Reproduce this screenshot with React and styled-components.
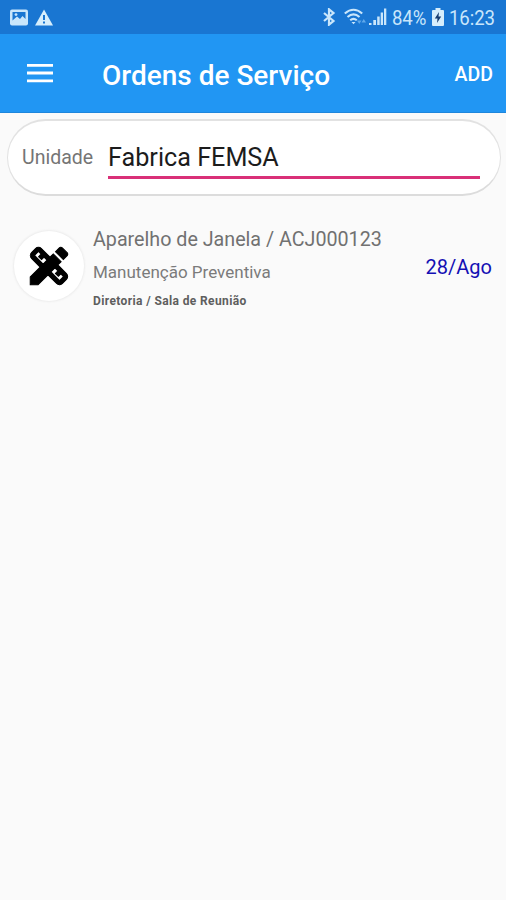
import React from "react";
import styled, { createGlobalStyle } from "styled-components";
import { MdDesignServices } from "react-icons/md";

const GlobalStyle = createGlobalStyle`
  * {
    box-sizing: border-box;
  }
  body {
    margin: 0;
    background: #fafafa;
    font-family: Roboto, "Liberation Sans", sans-serif;
  }
`;

const Screen = styled.div`
  display: flex;
  flex-direction: column;
  height: 900px;
  background: #fafafa;
`;

const StatusBar = styled.div`
  display: flex;
  justify-content: space-between;
  height: 34px;
  padding: 0 9px 0 10px;
  background: #1976d2;
  color: #c9e6fb;
`;

const StatusGroup = styled.div`
  display: flex;
  align-items: center;
  svg {
    display: block;
    flex: none;
  }
`;

const StatusText = styled.span`
  width: ${props => props.$width};
  margin-left: ${props => props.$gap};
  font-size: 20px;
  line-height: 34px;
  white-space: nowrap;
  letter-spacing: -0.1px;
  transform: translateY(1px) scaleX(0.93);
  transform-origin: left center;
`;

const AppBar = styled.header`
  display: flex;
  align-items: center;
  height: 79px;
  padding: 0 13px 0 27px;
  background: #2196f3;
  border-bottom: 1px solid #1e86dc;
  color: #fff;
`;

const MenuButton = styled.button`
  width: 26px;
  padding: 0;
  border: 0;
  background: none;
  svg {
    display: block;
  }
`;

const Title = styled.h1`
  flex: 1;
  margin: 5px 0 0 49px;
  font-size: 28px;
  font-weight: 500;
  line-height: 34px;
`;

const AddButton = styled.button`
  margin-top: 4px;
  padding: 0;
  border: 0;
  background: none;
  color: #fff;
  font: 500 19.5px/24px Roboto, sans-serif;
`;

const UnitCard = styled.section`
  display: flex;
  height: 77px;
  margin: 6px 5px 0 7px;
  padding: 0 20px 0 14px;
  border: 1px solid #e2e2e2;
  border-top-width: 2px;
  border-bottom: 2px solid #dcdcdc;
  border-radius: 39px;
  background: #fff;
`;

const UnitLabel = styled.label`
  width: 86px;
  padding-top: 25px;
  color: #757575;
  font-size: 19.5px;
  line-height: 24px;
`;

const UnitValue = styled.div`
  flex: 1;
  height: 58px;
  padding-top: 21px;
  border-bottom: 3px solid #d93078;
  color: #1c1c1c;
  font-size: 25.2px;
  line-height: 32px;
`;

const OrderRow = styled.article`
  display: flex;
  margin-top: 29px;
  padding: 0 14px;
`;

const Avatar = styled.div`
  display: flex;
  align-items: center;
  justify-content: center;
  width: 70px;
  height: 70px;
  margin-top: 6px;
  border-radius: 50%;
  background: #fff;
  box-shadow: 0 0 2px 1px #ececec;
`;

const ToolsIcon = styled(MdDesignServices)`
  width: 50px;
  height: 50px;
  color: #000;
  path:not([fill="none"]) {
    stroke: #000;
    stroke-width: 0.5px;
  }
  [fill="none"] {
    stroke: none;
  }
`;

const OrderInfo = styled.div`
  flex: 1;
  padding-left: 9px;
`;

const Equipment = styled.div`
  padding-top: 1px;
  color: #717171;
  font-size: 19.7px;
  line-height: 28px;
`;

const Service = styled.div`
  margin-top: 6px;
  color: #7b7b7b;
  font-size: 17px;
  line-height: 24px;
`;

const Place = styled.div`
  margin-top: 8px;
  color: #5e5e5e;
  font-size: 12px;
  font-weight: 700;
  line-height: 18px;
  letter-spacing: 0.38px;
`;

const DueDate = styled.time`
  margin-top: 29px;
  color: #1410b4;
  font-size: 20px;
  line-height: 26px;
`;

const PictureIcon = () => (
  <svg width="18" height="17" viewBox="0 0 18 17">
    <rect x="0" y="0.5" width="18" height="16" rx="2" fill="#c9e6fb" />
    <path d="M2.500 3h13v7l-3-3-2.500 3L7 7.500l-4.500 4z" fill="#1976d2" />
    <circle cx="6" cy="5.600" r="1.400" fill="#c9e6fb" />
  </svg>
);

const WarningMark = styled.svg`
  margin-left: 7px;
`;

const WarningIcon = () => (
  <WarningMark width="18" height="17" viewBox="0 0 18 17">
    <path d="M9 0.500L18 16.500H0z" fill="#d6eefc" />
    <path d="M8 6h2v5H8zM8 12.500h2v2H8z" fill="#1976d2" />
  </WarningMark>
);

const BluetoothIcon = () => (
  <svg width="13" height="18" viewBox="0 0 13 18" fill="none" stroke="#c9e6fb">
    <path d="M1 5l9.500 8-4.500 3.700V1.300L10.500 5 1 13" strokeWidth="2.200" />
  </svg>
);

const WifiIcon = () => (
  <svg width="24" height="18" viewBox="0 0 24 18" fill="none" stroke="#c9e6fb">
    <path
      d="M0.800 5.500Q9.500-2 18.200 5.500M3.500 9Q9.500 3.800 15.500 9M6.200 12.300Q9.500 9.500 12.800 12.300"
      strokeWidth="2.100"
    />
    <path d="M7.500 14h4l-2 2.300z" fill="#c9e6fb" stroke="none" />
    <path d="M13 12.500h4.500L15.250 16zM17.500 14.500l2.250-3.500L22 14.500z" fill="#5fa8ea" stroke="none" />
  </svg>
);

const SignalIcon = () => (
  <svg width="18" height="18" viewBox="0 0 18 18" fill="#c9e6fb">
    <path d="M0 15h2.500v2H0zM4.300 12H7v5H4.300zM8.200 8.500h2.500V17H8.200zM11.700 4.500H14V17h-2.300zM15 0.500h2.300V17H15z" />
  </svg>
);

const BatteryIcon = () => (
  <svg width="12" height="18" viewBox="0 0 12 18">
    <path
      d="M3.500 0h5v2H11a1 1 0 0 1 1 1v14a1 1 0 0 1-1 1H1a1 1 0 0 1-1-1V3a1 1 0 0 1 1-1h2.500z"
      fill="#d6eefc"
    />
    <path d="M7 4L2.800 10.500h2.700L5 15l4.200-6.500H6.500z" fill="#173d70" />
  </svg>
);

const MenuIcon = () => (
  <svg width="26" height="20" viewBox="0 0 26 20" fill="#fff">
    <path d="M0 1h26v2.700H0zM0 8.600h26v2.800H0zM0 16.500h26v2.700H0z" />
  </svg>
);

const Spacer = styled.span`
  width: ${props => props.$width};
`;

const App = () => (
  <>
    <GlobalStyle />
    <Screen>
      <StatusBar>
        <StatusGroup>
          <PictureIcon />
          <WarningIcon />
        </StatusGroup>
        <StatusGroup>
          <BluetoothIcon />
          <Spacer $width="8px" />
          <WifiIcon />
          <Spacer $width="1px" />
          <SignalIcon />
          <StatusText $width="35px" $gap="5px">
            84%
          </StatusText>
          <Spacer $width="5px" />
          <BatteryIcon />
          <StatusText $width="48px" $gap="5px">
            16:23
          </StatusText>
        </StatusGroup>
      </StatusBar>
      <AppBar>
        <MenuButton aria-label="Menu">
          <MenuIcon />
        </MenuButton>
        <Title>Ordens de Serviço</Title>
        <AddButton>ADD</AddButton>
      </AppBar>
      <UnitCard>
        <UnitLabel>Unidade</UnitLabel>
        <UnitValue>Fabrica FEMSA</UnitValue>
      </UnitCard>
      <OrderRow>
        <Avatar>
          <ToolsIcon />
        </Avatar>
        <OrderInfo>
          <Equipment>Aparelho de Janela / ACJ000123</Equipment>
          <Service>Manutenção Preventiva</Service>
          <Place>Diretoria / Sala de Reunião</Place>
        </OrderInfo>
        <DueDate>28/Ago</DueDate>
      </OrderRow>
    </Screen>
  </>
);

export default App;
